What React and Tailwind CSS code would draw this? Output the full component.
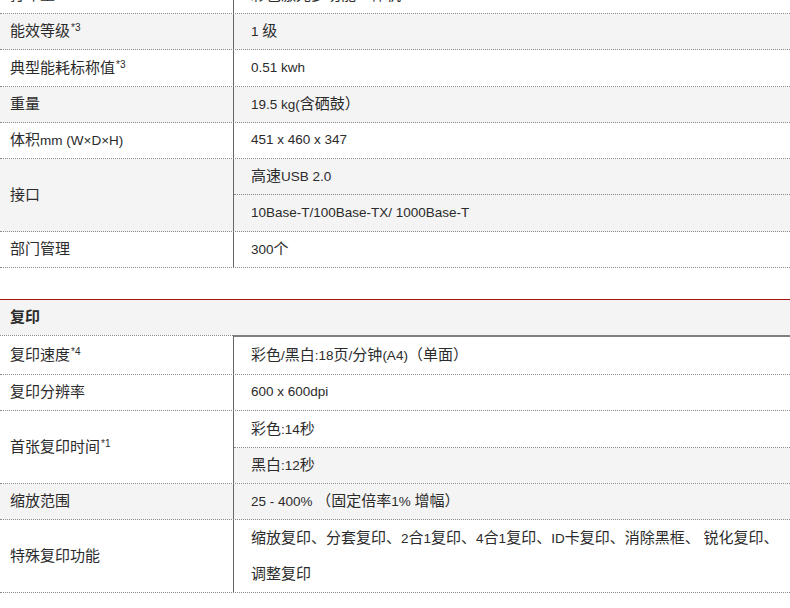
import React from 'react';

// CJK runs render a bit larger than the latin runs, like the source page
const CJK_RE = /([\u2E80-\u9FFF\u3000-\u303F\uFF00-\uFFEF]+)/;

const Mixed = ({ text }) =>
  text.split(CJK_RE).map((part, i) =>
    CJK_RE.test(part) ? (
      <span key={i} className="text-[15px]">{part}</span>
    ) : (
      <React.Fragment key={i}>{part}</React.Fragment>
    )
  );

const TABLE_ONE = [
  { label: '打印量', values: ['彩色激光多功能一体机'], hs: ['h-[35px]'], gray: false },
  { label: '能效等级', sup: '*3', values: ['1 级'], hs: ['h-[35px]'], gray: true },
  { label: '典型能耗标称值', sup: '*3', values: ['0.51 kwh'], hs: ['h-[36px]'], gray: false },
  { label: '重量', values: ['19.5 kg(含硒鼓）'], hs: ['h-[35px]'], gray: true },
  { label: '体积mm (W×D×H)', values: ['451 x 460 x 347'], hs: ['h-[35px]'], gray: false },
  { label: '接口', values: ['高速USB 2.0', '10Base-T/100Base-TX/ 1000Base-T'], hs: ['h-[36px]', 'h-[36px]'], gray: true },
  { label: '部门管理', values: ['300个'], hs: ['h-[35px]'], gray: false },
];

const TABLE_TWO = [
  { label: '复印速度', sup: '*4', values: ['彩色/黑白:18页/分钟(A4)（单面）'], hs: ['h-[37px]'], gray: false, first: true },
  { label: '复印分辨率', values: ['600 x 600dpi'], hs: ['h-[35px]'], gray: false },
  { label: '首张复印时间', sup: '*1', values: ['彩色:14秒', '黑白:12秒'], hs: ['h-[37px]', 'h-[35px]'], gray: false, subGray: [false, true] },
  { label: '缩放范围', values: ['25 - 400% （固定倍率1% 增幅）'], hs: ['h-[35px]'], gray: true },
  {
    label: '特殊复印功能',
    values: ['缩放复印、分套复印、2合1复印、4合1复印、ID卡复印、消除黑框、 锐化复印、', '调整复印'],
    hs: ['h-[36px]', 'h-[36px]'],
    gray: false,
    plain: true,
  },
];

const SpecRow = ({ row }) => (
  <div className={`flex border-b border-dotted border-[#8a8a8a] ${row.gray ? 'bg-[#f4f4f4]' : 'bg-white'}`}>
    <div
      className={`w-[233px] shrink-0 pl-[10px] flex items-center ${
        row.first ? 'border-t border-dotted border-[#8a8a8a]' : ''
      }`}
    >
      <span>
        <Mixed text={row.label} />
        {row.sup && <sup className="text-[10px] ml-[1px]">{row.sup}</sup>}
      </span>
    </div>
    <div
      className={`flex-1 flex flex-col border-l border-[#666] ${
        row.first ? 'border-t-2 border-t-[#808080]' : ''
      }`}
    >
      {row.values.map((value, idx) => (
        <div
          key={idx}
          className={`${row.hs[idx]} pl-[17px] pr-[4px] flex items-center whitespace-nowrap ${
            idx < row.values.length - 1 && !row.plain ? 'border-b border-dotted border-[#8a8a8a]' : ''
          } ${row.subGray && row.subGray[idx] ? 'bg-[#f4f4f4]' : ''}`}
        >
          <span>
            <Mixed text={value} />
          </span>
        </div>
      ))}
    </div>
  </div>
);

const App = () => {
  return (
    <div
      className="w-[790px] h-[608px] overflow-hidden bg-white text-[#2b2b2b] text-[13.5px]"
      style={{ fontFamily: '"Liberation Sans", Arial, "Noto Sans CJK SC", sans-serif' }}
    >
      <div className="-mt-[22px]">
        {/* Basic specs */}
        {TABLE_ONE.map((row) => (
          <SpecRow key={row.label} row={row} />
        ))}

        {/* Copy section */}
        <div className="mt-[31px] border-t border-[#a31515] bg-[#f4f4f4] h-[36px] pl-[10px] flex items-center font-bold">
          <Mixed text="复印" />
        </div>
        {TABLE_TWO.map((row) => (
          <SpecRow key={row.label} row={row} />
        ))}
      </div>
    </div>
  );
};

export default App;
